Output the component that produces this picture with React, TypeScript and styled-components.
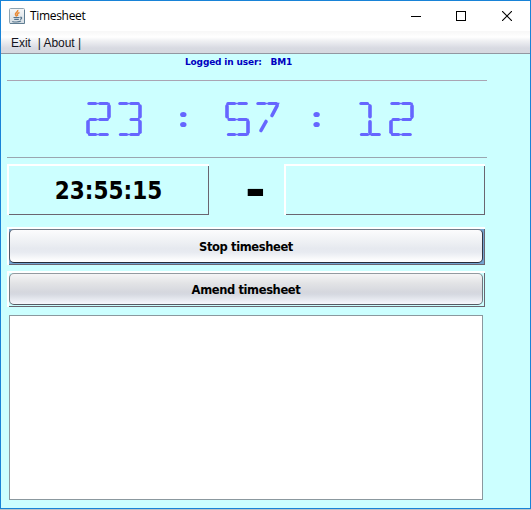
import React from 'react';
import styled, { createGlobalStyle } from 'styled-components';

const GlobalStyle = createGlobalStyle`
  * { box-sizing: border-box; }
  html, body { margin: 0; overflow: hidden; background: #b9c4cb; }
`;

const condensedFace = `"DejaVu Sans Condensed", "DejaVu Sans", sans-serif`;
const labelFace = `"DejaVu Sans", sans-serif`;

const Screen = styled.div`
  width: 531px;
  height: 510px;
  display: flex;
  flex-direction: column;
  background: #bcc3c7;
`;

const Window = styled.div`
  width: 531px;
  height: 509px;
  display: flex;
  flex-direction: column;
  border: 1px solid #1883d7;
  background: #ccffff;
`;

const TitleBar = styled.header`
  height: 30px;
  flex: none;
  display: flex;
  align-items: center;
  padding-left: 8px;
  background: #fff;
`;

const Title = styled.span`
  flex: 1;
  margin-left: 5px;
  font: 12px/16px "Open Sans", sans-serif;
  letter-spacing: -0.32px;
  color: #000;
`;

const WindowControl = styled.button`
  width: 45px;
  height: 29px;
  padding: 0;
  border: 0;
  background: none;
  display: flex;
  align-items: center;
  justify-content: center;

  &:last-child { width: 47px; }
`;

const MenuBar = styled.nav`
  height: 23px;
  flex: none;
  display: flex;
  align-items: center;
  padding: 2px 0 0 10px;
  border-bottom: 1px solid #9297a1;
  background: linear-gradient(#f7f7f7 0, #fff 6px, #f2f3f5 9px, #d8dae2 17px, #d6d9df 22px);
  font: 12px/16px "Liberation Sans", Arial, sans-serif;
  color: #141420;
`;

const MenuItem = styled.span<{ $gap?: number }>`
  margin-right: ${(p) => p.$gap ?? 0}px;
  letter-spacing: -0.05px;
  white-space: pre;
`;

const Content = styled.main`
  width: 480px;
  margin-left: 6px;
  display: flex;
  flex-direction: column;
`;

const UserLine = styled.div`
  height: 26px;
  padding: 1px 0 0 178px;
  font: bold 9px/14px ${labelFace};
  letter-spacing: -0.16px;
  color: #0000bf;
  white-space: pre;
`;

const Clock = styled.div`
  height: 78px;
  border-top: 1px solid #aaa5b3;
  border-bottom: 1px solid #9aa6b0;
  svg { display: block; }
`;

const Times = styled.div`
  height: 51px;
  margin-top: 6px;
  display: flex;
  width: 478px;
`;

const TimeBox = styled.div<{ $width: number }>`
  width: ${(p) => p.$width}px;
  height: 51px;
  border: solid #fff;
  border-width: 2px 0 0 2px;
  padding-right: 1px;
  box-shadow: inset -1px -1px 0 #6b6570;
  display: flex;
  align-items: center;
  justify-content: center;
  font: bold 24px/28px ${condensedFace};
  color: #000;
`;

const Dash = styled.div`
  flex: 1;
  display: flex;
  align-items: center;
  justify-content: center;
  padding: 0 0 0 18px;
  font: bold 50px/50px ${labelFace};
  color: #000;
`;

const Bevel = styled.div<{ $height: number; $top: number; $active?: boolean }>`
  width: 478px;
  height: ${(p) => p.$height}px;
  margin-top: ${(p) => p.$top}px;
  border: solid #fff;
  border-width: 2px 0 0 2px;
  padding: 0 2px 2px 0;
  box-shadow: inset -1px -1px 0 #6b6570;
  background: ${(p) => (p.$active ? '#73a4d1' : '#ccffff')};
`;

const ActionButton = styled.button<{ $active?: boolean }>`
  display: block;
  width: 100%;
  height: 100%;
  padding: 2px 0 0;
  border: 1px solid;
  border-color: ${(p) => (p.$active ? '#727b89 #323846 #262c38 #505968' : '#929aa0 #70777e #555b64 #737b82')};
  border-radius: 5px;
  background: ${(p) =>
    p.$active
      ? 'linear-gradient(#fcfcfd 0%, #f0f2f5 32%, #e6e9ef 58%, #e8ebf1 70%, #fff 97%)'
      : 'linear-gradient(#f5f5f6 0%, #e3e4e6 30%, #d5d7de 60%, #d6d9e1 68%, #f4f6fb 98%)'};
  font: bold 11.5px/16px ${labelFace};
  letter-spacing: -0.38px;
  color: #000;
`;

const Notes = styled.textarea`
  display: block;
  width: 474px;
  height: 185px;
  margin: 8px 0 0 2px;
  border: 1px solid #8b989e;
  background: #fff;
  resize: none;
  outline: none;
`;

/* Segment end points inside a 24 x 34 digit cell. */
const SEGMENTS: Record<string, [number, number, number, number]> = {
  topL: [2.8, 2.5, 9.5, 2.5],
  topR: [14, 2.5, 21.3, 2.5],
  midL: [4, 18.5, 9.5, 18.5],
  midR: [14, 18.5, 21.3, 18.5],
  botL: [3.4, 33.5, 9.5, 33.5],
  botR: [14, 33.5, 21.3, 33.5],
  upL: [2, 5, 2, 15.7],
  upR: [23, 5, 23, 15.7],
  lowL: [2, 20.8, 2, 31.3],
  lowR: [23, 20.8, 23, 31.3],
  upC: [12, 5, 12, 15.7],
  lowC: [12, 20.8, 12, 31.3],
  diagUp: [22, 5, 17, 14.5],
  diagLow: [11, 20.5, 6, 29.5],
};

const DIGITS: Record<string, { on: string[]; joints: string }> = {
  '1': { on: ['topL', 'upC', 'lowC', 'botL', 'botR'], joints: 'M9 2.5h1l2 2M9 33.5h6M12 31v3' },
  '2': {
    on: ['topL', 'topR', 'upR', 'midL', 'midR', 'lowL', 'botL', 'botR'],
    joints: 'M9 2.5h6M21 2.5h2v3M23 15v2l-2 1.5M9 18.5h6M4 18.5l-2 2.5M2 31l2 2.5M9 33.5h6',
  },
  '3': {
    on: ['topL', 'topR', 'upR', 'midR', 'lowR', 'botL', 'botR'],
    joints: 'M9 2.5h6M21 2.5l2 2.5M23 15l-2 3.5l2 2.5M23 31l-2 2.5M9 33.5h6',
  },
  '5': {
    on: ['topL', 'topR', 'upL', 'midL', 'midR', 'lowR', 'botL', 'botR'],
    joints: 'M9 2.5h6M3 2.5l-1.5 2.5M2 15l2 3.5M9 18.5h6M21 18.5h2v3M23 31v2.5h-2M9 33.5h6',
  },
  '7': { on: ['topL', 'topR', 'diagUp', 'diagLow'], joints: 'M9 2.5h6M21 2.5h2.5L22 6' },
};

function Digit({ value, x }: { value: string; x: number }) {
  const { on, joints } = DIGITS[value];
  return (
    <g transform={`translate(${x} 0)`} stroke="#6666ff" fill="none">
      {on.map((name) => {
        const [x1, y1, x2, y2] = SEGMENTS[name];
        return (
          <line
            key={name}
            x1={x1} y1={y1} x2={x2} y2={y2}
            strokeWidth={y1 === y2 ? 3 : 3.6}
            strokeLinecap="round"
          />
        );
      })}
      <path d={joints} strokeWidth="1.6" />
    </g>
  );
}

function Colon({ x }: { x: number }) {
  return (
    <g fill="#6666ff">
      <ellipse cx={x} cy="33.5" rx="3.2" ry="2.6" />
      <ellipse cx={x} cy="43.5" rx="3.2" ry="2.6" />
    </g>
  );
}

function LcdClock() {
  return (
    <svg width="480" height="76" role="img" aria-label="23:57:12">
      <g transform="translate(0 20)">
        <Digit value="2" x={79} />
        <Digit value="3" x={110} />
        <Digit value="5" x={218} />
        <Digit value="7" x={248} />
        <Digit value="1" x={351} />
        <Digit value="2" x={382} />
      </g>
      <Colon x={176.3} />
      <Colon x={309.6} />
    </svg>
  );
}

function JavaIcon() {
  return (
    <svg width="16" height="16" viewBox="0 0 16 16">
      <defs>
        <linearGradient id="tile" x2="0" y2="1">
          <stop offset="0" stopColor="#f5f7f8" />
          <stop offset="1" stopColor="#d5dde3" />
        </linearGradient>
      </defs>
      <rect x=".5" y=".5" width="15" height="15" rx="1" fill="url(#tile)" stroke="#8fa3b1" />
      <path d="M1 15.5h14.5V2" fill="none" stroke="#5f7d92" />
      <path d="M8.7 2C9.5 4 5.8 4.6 6.5 6.6L7.7 8.5M10.5 4.5C8 5.5 8 6.5 8.8 8" fill="none" stroke="#e98a35" strokeWidth="1.5" />
      <path d="M4.5 9.5h6M5.2 11.4h4.6M3.3 13.4c2 .8 6.5.8 8.7-.3M11 9.3c2.3-.6 2.2 1.5.1 2.1" fill="none" stroke="#55748c" strokeWidth="1.1" />
    </svg>
  );
}

export default function App() {
  return (
    <>
      <GlobalStyle />
      <Screen>
        <Window>
          <TitleBar>
            <JavaIcon />
            <Title>Timesheet</Title>
            <WindowControl aria-label="Minimize">
              <svg width="10" height="10"><path d="M0 5.5h10" stroke="#000" /></svg>
            </WindowControl>
            <WindowControl aria-label="Maximize">
              <svg width="10" height="10"><rect x=".5" y=".5" width="9" height="9" fill="none" stroke="#000" /></svg>
            </WindowControl>
            <WindowControl aria-label="Close">
              <svg width="10" height="10"><path d="M0 0l10 10M10 0L0 10" stroke="#000" strokeWidth="1.1" /></svg>
            </WindowControl>
          </TitleBar>
          <MenuBar>
            <MenuItem $gap={7}>Exit</MenuItem>
            <MenuItem>| About |</MenuItem>
          </MenuBar>
          <Content>
            <UserLine>Logged in user:   BM1</UserLine>
            <Clock><LcdClock /></Clock>
            <Times>
              <TimeBox $width={202}>23:55:15</TimeBox>
              <Dash>-</Dash>
              <TimeBox $width={201} />
            </Times>
            <Bevel $height={38} $top={12} $active>
              <ActionButton $active>Stop timesheet</ActionButton>
            </Bevel>
            <Bevel $height={36} $top={6}>
              <ActionButton>Amend timesheet</ActionButton>
            </Bevel>
            <Notes aria-label="Notes" />
          </Content>
        </Window>
      </Screen>
    </>
  );
}
